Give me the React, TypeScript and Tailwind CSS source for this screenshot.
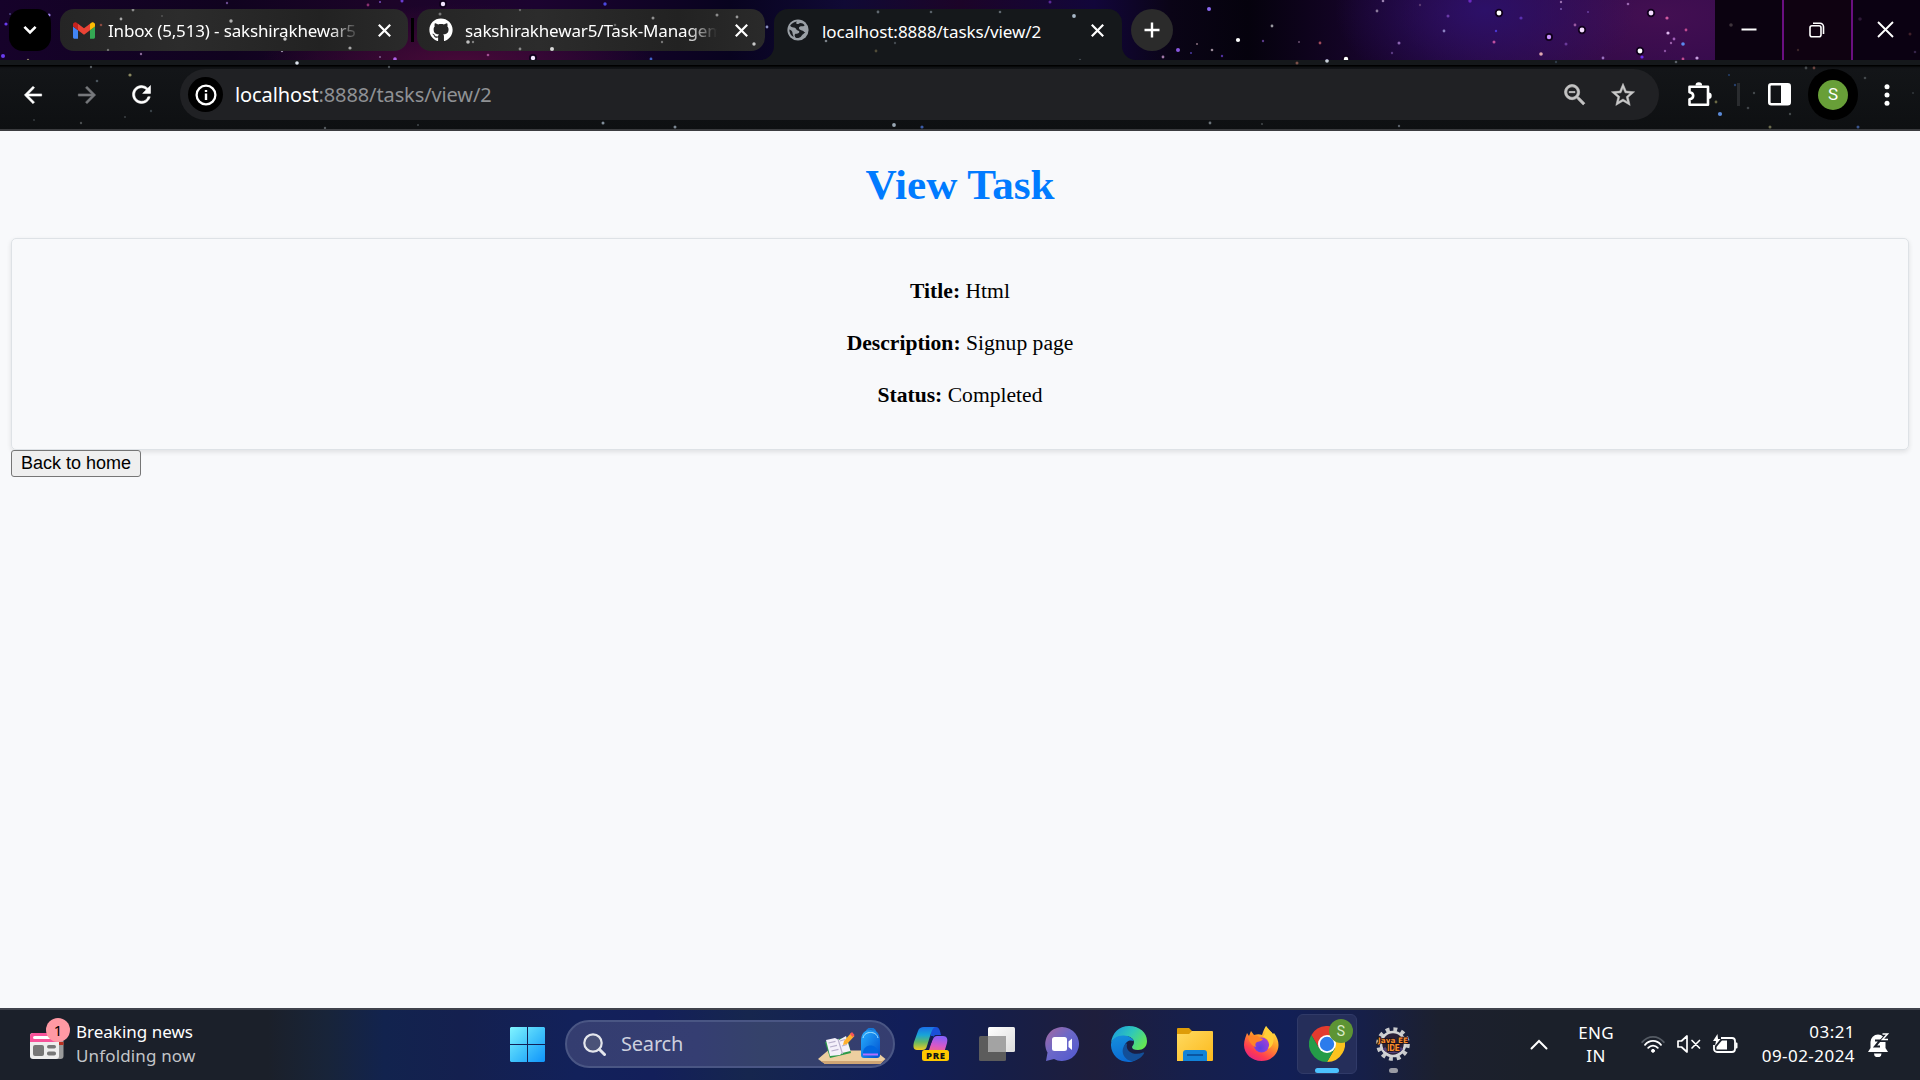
import type { ReactNode } from "react";
import { FaGithub } from "react-icons/fa";

type Star = [number, number, number, string];

const stripStars: Star[] = [
  [6, 24, 1.6, "#6a3cf0"], [10, 14, 1, "#46407a"], [3, 56, 2, "#6a3cf0"], [49, 15, 1.6, "#9a80e8"], [61, 61, 1, "#7050c0"],
  [28, 60, 1.2, "#8a8060"], [227, 3, 1.2, "#6a4a90"], [282, 51, 1.2, "#9a8ca8"], [141, 54, 1.2, "#8a6a98"], [443, 4, 2.2, "#f2e4ff"],
  [368, 5, 1.4, "#8a3070"], [380, 2, 1, "#7a50c0"], [402, 1, 1.5, "#6a3cd0"], [395, 59, 1.8, "#b060e8"], [380, 57, 1, "#806090"],
  [533, 58, 2.2, "#f4e8ff"], [605, 4, 1.7, "#4a48e0"], [552, 49, 1, "#3a3060"], [488, 55, 1.3, "#a05090"], [651, 59, 1.4, "#3f62c8"],
  [767, 27, 1.4, "#8a90c0"], [1050, 2, 1.5, "#5a2a98"], [1209, 9, 2, "#8a68f0"], [1238, 40, 2.1, "#ffffff"], [1178, 50, 2, "#8a58e0"],
  [1163, 57, 1.4, "#a078a8"], [1197, 44, 1, "#8a7080"], [1212, 50, 1.3, "#9a8a98"], [1222, 56, 1.2, "#5030a0"], [1191, 53, 1, "#4a3aa0"],
  [1272, 26, 1.4, "#9a9aa0"], [1263, 41, 1.2, "#5a3a88"], [1299, 42, 1, "#6a5070"], [1320, 43, 1.4, "#a04a5a"], [1383, 1, 1.3, "#9a80b0"],
  [1377, 11, 1.4, "#8a7a9a"], [1399, 43, 1.5, "#8a64b0"], [1392, 53, 1.2, "#5a3a80"], [1346, 59, 2.2, "#ffffff"], [1327, 61, 1.8, "#d8d8ff"],
  [1420, 5, 1.2, "#5a3a70"], [1448, 16, 1.5, "#6a3aa8"], [1444, 31, 1.4, "#8a80c0"], [1499, 13, 2.4, "#ffffff"], [1521, 18, 1.6, "#5a30b0"],
  [1496, 31, 1.2, "#4a38d0"], [1494, 42, 1.5, "#c050a0"], [1549, 37, 2.2, "#c890ff"], [1541, 54, 1.8, "#e0a8b0"], [1566, 44, 1.5, "#6a3a9a"],
  [1470, 1, 1.7, "#6a2ac0"], [1561, 2, 1.2, "#9a70b0"], [1575, 25, 1.4, "#9a5aa0"], [1561, 9, 1, "#7a5ab0"], [1582, 30, 2.4, "#f4dcff"],
  [1588, 12, 1, "#6a40a0"], [1651, 13, 2.4, "#f4dcff"], [1667, 18, 1.6, "#d05aa0"], [1668, 33, 1.6, "#e0b8f0"], [1683, 44, 1.8, "#5a8af0"],
  [1640, 51, 2.4, "#ffffff"], [1642, 57, 1.6, "#6a30f0"], [1674, 39, 1.4, "#a060b8"], [1686, 30, 1.4, "#c04a90"], [1628, 4, 1.3, "#9a68b0"],
  [1671, 43, 1.2, "#9a60a8"], [1697, 58, 1.6, "#c8a0e0"], [1683, 59, 1.4, "#c04a90"], [1603, 58, 1.4, "#9a70c0"], [1665, 51, 1.2, "#8a50a0"],
];

const controlStars: Star[] = [
  [16, 25, 1.8, "#3e343c"], [145, 19, 1.8, "#2e1838"], [195, 34, 1.5, "#40202a"], [83, 50, 1.2, "#3a2428"], [200, 52, 1.3, "#352448"],
];

const tabStars: Star[] = [
  [133, 10, 1.4, "#8a8a8a"], [121, 19, 1.4, "#a8a8a8"], [101, 25, 1.3, "#8a4a40"], [231, 21, 1.7, "#b0b0b0"], [285, 39, 1.7, "#d0d0d0"],
  [350, 48, 1.6, "#a8a8a8"], [108, 50, 1.2, "#707070"], [162, 16, 1, "#555"], [468, 42, 1.8, "#c0c0c0"], [473, 42, 1.2, "#808080"],
  [520, 49, 1.4, "#8a8a8a"], [552, 49, 2, "#d8d8d8"], [520, 10, 1.2, "#666"], [440, 14, 1.5, "#777"], [653, 18, 1.5, "#909090"],
  [717, 15, 1.5, "#8a8a8a"], [737, 17, 1.4, "#999"], [754, 44, 1.7, "#c8c8c8"], [615, 25, 1.3, "#666"], [662, 42, 1.2, "#777"],
  [826, 41, 1.3, "#7a8088"], [878, 12, 1.4, "#606870"], [931, 12, 1.3, "#586068"], [1000, 12, 1.3, "#606870"], [1074, 16, 1.9, "#a8b8c8"],
  [876, 51, 1.4, "#504c38"], [895, 43, 1.2, "#444a50"], [1080, 60, 1.2, "#444a50"],
];

const toolbarStars: Star[] = [
  [297, 3, 1.8, "#dfe6ee"], [91, 7, 1.2, "#555b60"], [130, 15, 1.6, "#8a8860"], [97, 21, 1.3, "#4a545c"], [151, 51, 1.2, "#3a4248"],
  [125, 57, 1.1, "#3a3e42"], [34, 60, 1.1, "#33383c"], [81, 63, 1.2, "#4a4e50"], [389, 7, 1.2, "#4a5055"], [325, 68, 1.2, "#555b60"],
  [418, 65, 1.1, "#3f4448"], [603, 63, 1.5, "#808c98"], [675, 67, 1.5, "#7c8894"], [894, 65, 1.9, "#9aa8b4"], [922, 67, 1.6, "#3c5ca8"],
  [1210, 63, 1.4, "#6a7278"], [1297, 3, 1.5, "#7a5048"], [1327, 1, 1.8, "#c8d0d8"], [1399, 66, 1.2, "#5a6068"], [1262, 64, 1, "#44494c"],
  [1676, 2, 1.3, "#5a6068"], [1556, 2, 1.2, "#303c48"], [1720, 54, 2.1, "#5a8ad8"], [1716, 42, 1.4, "#6a6844"], [1748, 48, 1.3, "#3f4448"],
  [1754, 33, 1.2, "#44494c"], [1735, 25, 1.2, "#26406c"], [1806, 8, 1.4, "#44494c"], [1814, 8, 1.4, "#6a4440"], [1865, 18, 1.3, "#44494c"],
  [1770, 67, 1.5, "#6a6a4c"], [1858, 67, 1.5, "#3a548c"], [1790, 54, 1.2, "#44494c"], [1913, 33, 1, "#33383c"], [1729, 15, 1, "#26406c"],
];

function Starfield({ stars, height, dx = 0, dy = 0 }: { stars: Star[]; height: number; dx?: number; dy?: number }) {
  return (
    <svg className="pointer-events-none absolute left-0 top-0" width="1920" height={height} viewBox={`0 0 1920 ${height}`}>
      {stars.map(([x, y, r, c], i) => (
        <g key={i}>
          {r > 2.1 && <circle cx={x - dx} cy={y - dy} r={r + 1.8} fill="#10001c" />}
          <circle cx={x - dx} cy={y - dy} r={r} fill={c} />
        </g>
      ))}
    </svg>
  );
}

const glyphs = {
  back: "M20 11H7.830l5.590-5.590L12 4l-8 8 8 8 1.410-1.410L7.830 13H20v-2z",
  forward: "M12 4l-1.410 1.410L16.170 11H4v2h12.170l-5.580 5.590L12 20l8-8z",
  reload: "M17.650 6.350A7.958 7.958 0 0 0 12 4c-4.420 0-7.990 3.580-7.990 8s3.570 8 7.990 8c3.730 0 6.840-2.550 7.730-6h-2.080A5.990 5.990 0 0 1 12 18c-3.310 0-6-2.690-6-6s2.690-6 6-6c1.660 0 3.140.690 4.220 1.780L13 11h7V4l-2.350 2.350z",
  zoomOut: "M15.500 14h-.790l-.280-.270A6.471 6.471 0 0 0 16 9.500 6.500 6.500 0 1 0 9.500 16c1.610 0 3.090-.590 4.230-1.570l.270.280v.790l5 4.990L20.490 19l-4.990-5zm-6 0C7.010 14 5 11.990 5 9.500S7.010 5 9.500 5 14 7.010 14 9.500 11.990 14 9.500 14zM7 9h5v1H7z",
  star: "M22 9.240l-7.190-.620L12 2 9.190 8.630 2 9.240l5.460 4.730L5.820 21 12 17.270 18.180 21l-1.630-7.030L22 9.240zM12 15.400l-3.760 2.270 1-4.280-3.320-2.880 4.380-.380L12 6.100l1.710 4.040 4.380.380-3.320 2.880 1 4.280L12 15.400z",
};

function Glyph({ name, size, color, weight, className }: { name: keyof typeof glyphs; size: number; color: string; weight: number; className: string }) {
  return (
    <svg className={`relative shrink-0 ${className}`} width={size} height={size} viewBox="0 0 24 24" fill={color} stroke={color} strokeWidth={weight}>
      <path d={glyphs[name]} />
    </svg>
  );
}

function CloseX({ className = "" }: { className?: string }) {
  return (
    <svg className={`shrink-0 ${className}`} width="13" height="13" viewBox="0 0 13 13" stroke="#fff" strokeWidth="2.2">
      <path d="M.8.8l11.400 11.400M12.200.8L.8 12.200" />
    </svg>
  );
}

function GmailIcon() {
  return (
    <svg width="22" height="17" viewBox="52 42 88 66">
      <path fill="#4285f4" d="M58 108h14V74L52 59v43c0 3.32 2.69 6 6 6" />
      <path fill="#34a853" d="M120 108h14c3.32 0 6-2.69 6-6V59l-20 15" />
      <path fill="#fbbc04" d="M120 48v26l20-15v-8c0-7.42-8.47-11.65-14.4-7.2" />
      <path fill="#ea4335" d="M72 74V48l24 18 24-18v26L96 92" />
      <path fill="#c5221f" d="M52 51v8l20 15V48l-5.6-4.2c-5.94-4.45-14.4-.22-14.4 7.2" />
    </svg>
  );
}

function GlobeIcon() {
  return (
    <svg width="22" height="22" viewBox="0 0 22 22">
      <circle cx="11" cy="11" r="10.6" fill="#9aa0a6" />
      <path fill="#1a1d21" d="M10 2.4c-3 .4-5.600 1.900-6.900 4.300 1.200 1.700 3.300 1.500 4.800 2.100 1.600.700 1.200 2.400 2.900 2.700 1.900.300 1.800 1.800.9 2.600-1.200 1-3.100.200-3.900 1.500-.6 1 .2 2.200 1 3.200 2 .6 4.500-.2 5.600-1.900 1.100-1.700 2.800-2 3.900-3.800-1.600-.2-2-1.500-3.500-1.700-1.400-.200-2.300-.600-2.800-1.800-.5-1.300.8-2.200 2-2.300 1.700-.1 2.900.100 3.600-1.100-1.500-2-4.500-2.700-5.800-1.500-.9.8-2.600.3-2.600-.7 0-.6.300-1.100.8-1.600z" />
      <path fill="#1a1d21" d="M2.300 10.400c1.700.3 3.200 1.700 3.200 3.500 0 1.500.8 2.100 1.100 4-2.700-1.400-4.400-4.300-4.300-7.500z" />
    </svg>
  );
}

function InactiveTab({ icon, title, dx }: { icon: ReactNode; title: string; dx: number }) {
  return (
    <div className="relative flex h-[42px] w-[348px] shrink-0 items-center overflow-hidden rounded-[14px] bg-[linear-gradient(90deg,#252525,#2c2c2c_35%,#222_75%,#2a2a2a)] pl-3">
      <Starfield stars={tabStars} height={42} dx={dx} dy={9} />
      <div className="flex w-6 shrink-0 justify-center">{icon}</div>
      <div className="ml-3 mt-[2px] w-[252px] shrink-0 overflow-hidden whitespace-nowrap text-[17px] leading-[30px] tracking-[-0.15px] text-white [mask-image:linear-gradient(90deg,#000_88%,transparent)]">
        {title}
      </div>
      <CloseX className="ml-[18px]" />
    </div>
  );
}

function TabStrip() {
  return (
    <div className="relative flex h-[60px] items-start overflow-hidden bg-[radial-gradient(ellipse_200px_60px_at_460px_64px,#480a38,transparent),radial-gradient(ellipse_150px_90px_at_1485px_10px,#2c1068,transparent),radial-gradient(ellipse_260px_100px_at_1660px_15px,#430f52,transparent),linear-gradient(90deg,#16022a_0,#10031f_12%,#1c0428_20%,#1c0330_28%,#08031f_38%,#100a35_44%,#1c0428_50%,#12063a_57%,#0a0416_61%,#05020d_65%,#16042a_71%,#240638_78%,#2c0848_88%)]">
      <Starfield stars={stripStars} height={60} />
      <div className="relative ml-[9px] mt-[9px] flex h-[42px] w-[42px] items-center justify-center rounded-[14px] bg-black">
        <svg width="14" height="10" viewBox="0 0 14 10" fill="none" stroke="#fff" strokeWidth="2.6"><path d="M1.400 1.800L7 7.400l5.600-5.600" /></svg>
      </div>
      <div className="relative ml-[9px] mt-[9px] flex items-center">
        <InactiveTab icon={<GmailIcon />} title="Inbox (5,513) - sakshirakhewar5" dx={60} />
        <div className="mx-[3px] h-6 w-[3px] bg-black" />
        <InactiveTab icon={<FaGithub size={24} color="#fff" />} title="sakshirakhewar5/Task-Managem" dx={417} />
      </div>
      <div className="relative ml-[9px] mt-[9px] flex h-[51px] w-[348px] shrink-0 items-start">
        <svg className="absolute -left-[14px] bottom-0" width="14" height="14"><path d="M14 0v14H0A14 14 0 0 0 14 0" fill="#15181b" /></svg>
        <svg className="absolute -right-[14px] bottom-0" width="14" height="14"><path d="M0 0v14h14A14 14 0 0 1 0 0" fill="#15181b" /></svg>
        <div className="relative flex h-[51px] w-full overflow-hidden rounded-t-[14px] bg-[#15181b] pl-[13px]">
          <Starfield stars={tabStars} height={51} dx={774} dy={9} />
          <div className="mt-[10px]"><GlobeIcon /></div>
          <div className="ml-[13px] mt-[8px] w-[262px] whitespace-nowrap text-[17px] leading-[30px] tracking-[-0.05px] text-white">localhost:8888/tasks/view/2</div>
          <CloseX className="ml-[7px] mt-[15px]" />
        </div>
      </div>
      <div className="relative ml-[9px] mt-[9px] flex h-[42px] w-[42px] items-center justify-center rounded-full bg-[#2b2b2b]">
        <svg width="16" height="16" stroke="#fff" strokeWidth="2.4"><path d="M8 .5v15M.5 8h15" /></svg>
      </div>
      <div className="relative ml-auto flex h-full w-[205px] overflow-hidden">
        <div className="flex w-[67px] items-center justify-center bg-[#0b0210]">
          <svg className="relative -top-px" width="16" height="3"><path d="M.5 1.500h15" stroke="#fff" strokeWidth="2" /></svg>
        </div>
        <div className="flex w-[71px] items-center justify-center border-x-2 border-[#6a0f80] bg-[#0f0211]">
          <svg className="relative -left-px" width="16" height="16" viewBox="0 0 16 16" fill="none" stroke="#fff" strokeWidth="1.600"><rect x="1" y="3.800" width="11" height="11" rx="2" /><path d="M4 1.200h7a3.500 3.500 0 0 1 3.500 3.500V12" /></svg>
        </div>
        <div className="flex w-[67px] items-center justify-center bg-[#0b0112]">
          <svg className="relative -left-px -top-px" width="17" height="17" stroke="#fff" strokeWidth="1.900"><path d="M1 1l15 15M16 1L1 16" /></svg>
        </div>
        <Starfield stars={controlStars} height={60} />
      </div>
    </div>
  );
}

function Toolbar() {
  return (
    <div className="relative flex h-[71px] items-center overflow-hidden border-b-2 border-[#3b3c3f] bg-[linear-gradient(#15181b_0_5px,#000_5px_6px,#0e1012_7px,#131518_9px,#0e1012)]">
      <Starfield stars={toolbarStars} height={69} />
      <Glyph name="back" className="ml-[20px]" size={26} color="#fff" weight={0.5} />
      <Glyph name="forward" className="ml-[28px]" size={26} color="#77797c" weight={0.5} />
      <Glyph name="reload" className="ml-[28px]" size={27} color="#fff" weight={0.5} />
      <div className="relative ml-[25px] flex h-[51px] w-[1479px] shrink-0 items-center rounded-full bg-[#202124] pl-2">
        <div className="flex h-[35px] w-[35px] items-center justify-center rounded-full bg-black">
          <svg width="22" height="22" viewBox="0 0 22 22" fill="none" stroke="#fff"><circle cx="11" cy="11" r="9.400" strokeWidth="2.300" /><path d="M11 9.500v6.500M11 6v2" strokeWidth="2.400" /></svg>
        </div>
        <div className="ml-[12px] whitespace-nowrap text-[20px] leading-[30px] tracking-[-0.11px] text-[#8f9194]">
          <span className="text-white">localhost</span>:8888/tasks/view/2
        </div>
        <Glyph name="zoomOut" className="ml-auto" size={28} color="#c4c4c4" weight={0.6} />
        <Glyph name="star" className="ml-[20px] mr-[22px]" size={28} color="#c8c8c8" weight={0.4} />
      </div>
      <svg className="relative ml-[28px] shrink-0" width="26" height="26" viewBox="0 0 26 26">
        <path d="M2.500 4.700H21v18H2.500v-5.500c2.800-.5 3.700-1.800 3.700-3.500s-.9-3-3.700-3.500z" fill="none" stroke="#fff" strokeWidth="2.600" strokeLinejoin="round" />
        <path d="M8.500 3.500a3.300 3.300 0 0 1 6.600 0zM21.500 10.500a3.200 3.200 0 0 1 0 6.400z" fill="#fff" />
      </svg>
      <div className="relative ml-[24px] h-[23px] w-[3px] bg-[#2a2c2f]" />
      <svg className="relative ml-[28px] shrink-0" width="23" height="23" viewBox="0 0 23 23">
        <rect x="1.300" y="1.300" width="20.400" height="20" rx="2" fill="none" stroke="#fff" strokeWidth="2.600" /><path d="M13 1h9v21h-9z" fill="#fff" />
      </svg>
      <div className="relative ml-[17px] flex h-[51px] w-[50px] shrink-0 items-center justify-center rounded-full bg-black">
        <div className="flex h-[30px] w-[30px] items-center justify-center rounded-full bg-[#689f38] font-[Roboto] text-[17px] text-white">S</div>
      </div>
      <svg className="relative ml-[26px]" width="6" height="22" fill="#fff"><circle cx="3" cy="2.800" r="2.500" /><circle cx="3" cy="11" r="2.500" /><circle cx="3" cy="19.200" r="2.500" /></svg>
    </div>
  );
}

function TaskField({ label, value }: { label: string; value: string }) {
  return <p className="leading-[52px]"><b>{label}:</b> {value}</p>;
}

function TaskPage() {
  return (
    <main className="h-[877px] bg-[#f8f9fb] px-[11px] font-['Liberation_Serif',serif] text-[21.6px] text-black">
      <h1 className="pt-[29px] text-center text-[43.2px] font-bold leading-[50px] text-[#007bff]">View Task</h1>
      <section className="mt-[28px] flex h-[212px] flex-col justify-center rounded-[5px] border border-[#dee2e6] pb-[2px] text-center shadow-[0_2px_5px_rgba(0,0,0,0.1)]">
        <TaskField label="Title" value="Html" />
        <TaskField label="Description" value="Signup page" />
        <TaskField label="Status" value="Completed" />
      </section>
      <button className="relative flex h-[27px] w-[130px] items-center justify-center whitespace-nowrap rounded-[3px] border border-[#767676] bg-[#efefef] font-['Liberation_Sans',sans-serif] text-[18px]">Back to home</button>
    </main>
  );
}

function NewsIcon() {
  return (
    <svg width="34" height="26" viewBox="0 0 34 26">
      <path d="M28 8h5.500v15a3 3 0 0 1-3 3H26z" fill="#9a9a9a" /><path d="M27 9h6.500v3H27z" fill="#b83020" />
      <rect width="29" height="26" rx="3" fill="#eee" /><path d="M3 0h23a3 3 0 0 1 3 3v6H0V3a3 3 0 0 1 3-3" fill="#f8539a" />
      <rect x="3" y="3" width="20" height="3" rx="1.500" fill="#fff" /><rect x="3" y="12" width="11" height="11" rx="2" fill="#777" />
      <rect x="17" y="12" width="9" height="3.500" rx="1.700" fill="#777" /><rect x="17" y="18.500" width="9" height="4" rx="1.800" fill="#777" />
    </svg>
  );
}

function WindowsLogo() {
  return (
    <svg className="relative -left-px" width="35" height="35" viewBox="0 0 35 35">
      <defs><linearGradient id="win" x1="0" y1="0" x2="35" y2="35" gradientUnits="userSpaceOnUse"><stop stopColor="#80f4ff" /><stop offset=".5" stopColor="#43c5fb" /><stop offset="1" stopColor="#0f94fb" /></linearGradient></defs>
      <path fill="url(#win)" d="M1 0h16v17H0V1zM18 0h16l1 1v16H18zM0 18h17v17H1l-1-1zM18 18h17v16l-1 1H18z" />
    </svg>
  );
}

function SearchDoodle() {
  return (
    <svg width="68" height="37" viewBox="0 0 68 37">
      <defs><linearGradient id="bag" x1="0" y1="0" x2="1" y2="1"><stop stopColor="#28b0ff" /><stop offset="1" stopColor="#0050d0" /></linearGradient></defs>
      <path d="M0 31l10-8.500h47L67.500 31 62 36H7z" fill="#edcfa0" /><path d="M0 31l3 2h61l3.500-2L62 36H7z" fill="#cfa574" />
      <path d="M7 14l22-5 4 16-21 5z" fill="#2c9a48" /><path d="M8 12l9-2 4 2 7-4 4.500 15-8.500 2-2 2-10 1z" fill="#f4f0fa" />
      <path d="M20 11l4.500 15M10.500 15l7-1.600M12 19l7-1.600M13.500 23l7-1.600M22 13l5-1.500M24 18l5-1.500" stroke="#b8b0cc" strokeWidth="1.200" />
      <path d="M25 17l1-4 7-8 3.500 3-7.500 8z" fill="#ffb02e" /><path d="M32 6l2-2 2.500 3-2 2z" fill="#f4535a" />
      <path d="M48.500 4c1-4.500 8-4.500 9 0" fill="none" stroke="#1678d8" strokeWidth="2" />
      <path d="M43 13c0-8 4-11 9.500-11S62 5 62 13v14q0 3-3 3H46q-3 0-3-3z" fill="url(#bag)" />
      <path d="M45 10c1-4 4-5.500 7.500-5.500S59 6 60 10" fill="none" stroke="#a4e4ff" strokeWidth="1" />
      <path d="M45 25c0-10 15-10 15 0v3H45z" fill="#0067e0" /><path d="M45 26.500h15" stroke="#b070ff" strokeWidth="2" />
    </svg>
  );
}

function CopilotIcon() {
  return (
    <svg width="36" height="36" viewBox="0 0 36 36">
      <defs>
        <linearGradient id="cpa" x1="0" y1="0" x2="0" y2="1"><stop stopColor="#1b6fe8" /><stop offset=".35" stopColor="#18a4d8" /><stop offset=".65" stopColor="#60b868" /><stop offset="1" stopColor="#f4cc20" /></linearGradient>
        <linearGradient id="cpb" x1="0.300" y1="0" x2=".1" y2="1"><stop stopColor="#8c60f8" /><stop offset=".5" stopColor="#d858c8" /><stop offset="1" stopColor="#ff7060" /></linearGradient>
      </defs>
      <path d="M17 1h6c3 0 4 3 5 8h-6l-4 5z" fill="#1a50d8" />
      <path d="M11 1h11c-2 1-3 3-4 6l-4 13c-1 3-2 4-5 4H4c-4 0-4-4-3-8L5 5c1-3 3-4 6-4" fill="url(#cpa)" />
      <path d="M24 10h6c4 0 5 3 4 7l-3 10H9c5 0 6-2 7-5l4-9c1-2 2-3 4-3" fill="url(#cpb)" />
      <path d="M20.500 10l-4.500 14h-4l2-2 4-12z" fill="#121c50" />
      <rect x="9" y="24" width="27" height="11" rx="2.500" fill="#ffc800" />
      <text x="22.800" y="33" textAnchor="middle" fontFamily="Open Sans" fontWeight="800" fontSize="9.500" letterSpacing=".6" fill="#161616">PRE</text>
    </svg>
  );
}

function TaskViewIcon() {
  return (
    <svg width="36" height="34" viewBox="0 0 36 34">
      <defs><linearGradient id="tv" x1="0" y1="0" x2="1" y2="1"><stop stopColor="#fff" /><stop offset="1" stopColor="#dcdcdc" /></linearGradient></defs>
      <rect y="9" width="27" height="25" rx="1.500" fill="#5c5c5c" /><rect x="9" width="27" height="25" rx="1.500" fill="url(#tv)" /><path d="M9 9h18v16H10l-1-1z" fill="#a3a3a3" />
    </svg>
  );
}

function ChatIcon() {
  return (
    <svg className="relative -left-px" width="34" height="35" viewBox="0 0 34 35">
      <defs><linearGradient id="chat" x1="0" y1="0" x2="1" y2="1"><stop stopColor="#a8689c" /><stop offset=".45" stopColor="#6c68c8" /><stop offset="1" stopColor="#5058d0" /></linearGradient></defs>
      <path d="M17 0a17 17 0 1 1-8 32L1 34l1.500-8.500A17 17 0 0 1 17 0" fill="url(#chat)" />
      <rect x="7" y="10" width="15" height="14" rx="2.500" fill="#fff" /><path d="M23.500 14.500l3.500-3v11.500l-3.500-3z" fill="#fff" />
    </svg>
  );
}

function EdgeIcon() {
  return (
    <svg width="36" height="36" viewBox="0 0 36 36">
      <defs>
        <linearGradient id="eg" x1="0" y1=".2" x2="1" y2=".7"><stop stopColor="#1a9be0" /><stop offset=".5" stopColor="#30c8b8" /><stop offset="1" stopColor="#66e850" /></linearGradient>
        <linearGradient id="eb" x1="0" y1="0" x2=".3" y2="1"><stop stopColor="#1590dc" /><stop offset="1" stopColor="#0b6cd4" /></linearGradient>
      </defs>
      <path d="M0 17C1 7 8 0 18 0c11 0 18 7 18 15 0 6-4 9-9 9-4 0-6-1-6-3 0-1 2-2 2-5 0-3-4-6-9-6C7 10 2 13 0 17" fill="url(#eg)" />
      <path d="M0 18C1 12 7 9 13 9.500c5 .2 9 3 9.500 5.500-3-1.600-8 0-9 5-1 7 6 13 16 10-3 4-8 6-12 6C7 36-.5 28 0 18" fill="url(#eb)" />
      <path d="M13.500 19c-5 8 1 16 8.500 16 5-1 9-4 11-7.500.6-1-.3-1.300-1-1-8 3.500-18-.2-16-8.500 0-1-1.500-.5-2.500 1" fill="#134f98" />
    </svg>
  );
}

function ExplorerIcon() {
  return (
    <svg width="36" height="33" viewBox="0 0 36 33">
      <defs><linearGradient id="fold" x1="0" y1="0" x2="1" y2="1"><stop stopColor="#ffda60" /><stop offset="1" stopColor="#fcb91c" /></linearGradient></defs>
      <path d="M0 1q0-1 1-1h11l4 4v6H0z" fill="#de9c08" /><path d="M0 6h12l3-3h20q1 0 1 1v28q0 1-1 1H0z" fill="url(#fold)" />
      <path d="M6 33V25q0-3 3-3h18q3 0 3 3v8z" fill="#1283d8" /><path d="M10 27h16" stroke="#0a4f98" strokeWidth="1.700" />
    </svg>
  );
}

function FirefoxIcon() {
  return (
    <svg width="35" height="36" viewBox="0 0 35 36">
      <defs>
        <linearGradient id="ff" x1=".8" y1="0" x2=".2" y2="1"><stop stopColor="#fff04a" /><stop offset=".4" stopColor="#ff9a28" /><stop offset=".75" stopColor="#ff3c50" /><stop offset="1" stopColor="#e0208c" /></linearGradient>
        <radialGradient id="fp" cx=".4" cy=".7" r=".7"><stop stopColor="#5b3fe0" /><stop offset="1" stopColor="#a040d8" /></radialGradient>
      </defs>
      <path d="M22 0c1 4 5 5 7 8l1-1c3 4 4.500 8 4.500 12C34.500 28 27 35 17.500 35S0 28 0 19c0-5 2-9 3-12l2 3 2-5 3 4c3-1 6-1 8 0 1-3 2-6 4-9" fill="url(#ff)" />
      <circle cx="17.500" cy="19" r="7.600" fill="url(#fp)" />
      <path d="M4 11c5-3 10-2 12 1l3 1c-1 2-3 2.500-6 3-2 1-2 3-1 5-4-1-7-5-8-10" fill="#ff8428" />
      <path d="M22 0c0 6-1 8-3 11 5 1 8 6 5 12 6-3 7-10 4-16" fill="#ffcf36" />
    </svg>
  );
}

function ChromeIcon() {
  return (
    <svg width="36" height="36" viewBox="0 0 36 36">
      <path d="M2.400 9A18 18 0 0 1 33.600 9H18l-7.800 13.500z" fill="#e33b2e" />
      <path d="M33.600 9A18 18 0 0 1 18 36l7.800-13.500L18 9z" fill="#fcc31e" />
      <path d="M18 36A18 18 0 0 1 2.400 9l7.800 13.500h15.600z" fill="#249c48" />
      <circle cx="18" cy="18" r="9" fill="#fff" /><circle cx="18" cy="18" r="7.200" fill="#2c7cec" />
    </svg>
  );
}

function EclipseIcon() {
  return (
    <svg width="36" height="34" viewBox="0 0 36 34">
      <circle cx="18" cy="17" r="14.600" fill="none" stroke="#c9cacc" strokeWidth="4.500" strokeDasharray="3.820 3.820" />
      <circle cx="18" cy="17" r="12" fill="#292038" stroke="#d2d3d5" strokeWidth="2.600" />
      <path d="M9 21c4 5 14 5 18 0" stroke="#544078" strokeWidth="3" fill="none" />
      <g fontFamily="DejaVu Sans" fontWeight="bold" fill="#f68c2c" stroke="#1b1016" strokeWidth="1.600" paintOrder="stroke" textAnchor="middle">
        <text x="18" y="16" fontSize="7.400" textLength="30">Java EE</text><text x="18.500" y="24" fontSize="8" textLength="13">IDE</text>
      </g>
    </svg>
  );
}

function AppCell({ children }: { children: ReactNode }) {
  return <div className="relative flex h-[60px] w-[66px] shrink-0 items-center justify-center">{children}</div>;
}

function SystemTray() {
  return (
    <div className="flex items-center text-[17px] text-white">
      <svg width="18" height="11" viewBox="0 0 18 11" fill="none" stroke="#fff" strokeWidth="2" strokeLinecap="round"><path d="M1.500 9.500L9 2l7.500 7.500" /></svg>
      <div className="ml-[25px] w-[46px] text-center leading-[23px] tracking-[0.3px]">ENG<br />IN</div>
      <svg className="ml-[22px]" width="24" height="20" viewBox="0 0 24 20" fill="none" stroke="#fff" strokeWidth="1.800" strokeLinecap="round">
        <path d="M1.200 8.200c6-7 15.600-7 21.600 0" stroke="#555b64" /><path d="M4 10.800c4.500-5.200 11.500-5.200 16 0M7.200 13.800c2.700-3 6.900-3 9.600 0" /><circle cx="12" cy="16.800" r="1.500" fill="#fff" strokeWidth="1" />
      </svg>
      <svg className="ml-[12px]" width="24" height="20" viewBox="0 0 24 20" fill="none" stroke="#fff" strokeWidth="1.700" strokeLinejoin="round" strokeLinecap="round">
        <path d="M1 7h3.500l5.500-5v16l-5.500-5H1zM15 6.500l7.500 7.500M22.500 6.500L15 14" />
      </svg>
      <svg className="ml-[12px]" width="25" height="21" viewBox="0 0 25 21">
        <path d="M8 4h11a3 3 0 0 1 3 3v8a3 3 0 0 1-3 3H4a3 3 0 0 1-3-3v-4" fill="none" stroke="#fff" strokeWidth="1.800" /><path d="M22.500 8.500h1q1 0 1 1v4q0 1-1 1h-1zM9 6.500h5v9H3.500v-2.500L8 7.500z" fill="#fff" />
        <path d="M4.500 0L0 7h3l-1 5 5.500-7H5z" fill="#fff" />
      </svg>
      <div className="ml-[20px] w-[97px] whitespace-nowrap text-right leading-[24px] tracking-[0.45px]">03:21<br />09-02-2024</div>
      <svg className="ml-[13px] mr-[30px]" width="22" height="25" viewBox="0 0 22 25">
        <path d="M2.500 10a7.500 7.500 0 0 1 15 0v6l2.500 4H0l2.500-4zM6 21.500h7.500a3.700 3.700 0 0 1-7.500 0" fill="#fff" />
        <path d="M7 8.500h5l-5 6h5" stroke="#1b202a" strokeWidth="2" fill="none" /><path d="M14.500 2h5l-5 6h5" stroke="#1b202a" strokeWidth="4" fill="none" /><path d="M14.500 2h5l-5 5.500h5.500" stroke="#fff" strokeWidth="1.500" fill="none" />
      </svg>
    </div>
  );
}

function Taskbar() {
  return (
    <footer className="flex h-[72px] items-center border-t-2 border-[#40434c] bg-[linear-gradient(90deg,#1b202a_0,#1b202a_14%,#182439_17%,#12234e_20%,#14204f_24%,#12215a_30%,#131f5a_34%,#16264e_39%,#111e59_47%,#161e48_52%,#1e1e3c_57%,#161f4c_62%,#121f56_67%,#161f48_71%,#1c202e_75%,#1b202a_80%)] pb-[2px] font-['Noto_Sans',sans-serif]">
      <div className="flex w-[495px] shrink-0 items-center">
        <div className="relative ml-[30px] mt-1"><NewsIcon />
          <div className="absolute -top-[15px] left-[16px] flex h-6 w-6 items-center justify-center rounded-full bg-[#ff99a4] text-[15px] leading-none text-black">1</div>
        </div>
        <div className="ml-[12px] whitespace-nowrap text-[17px] leading-[24px] text-white">Breaking news<br /><span className="tracking-[0.15px] text-[#c3c5c9]">Unfolding now</span></div>
      </div>
      <AppCell><WindowsLogo /></AppCell>
      <div className="ml-1 flex h-[48px] w-[330px] shrink-0 items-center rounded-full border-2 border-[#4a5684] bg-[linear-gradient(90deg,#343d70,#353e72_40%,#35426a_60%,#353d70)] pl-4">
        <svg width="23" height="23" viewBox="0 0 23 23" fill="none" stroke="#e4e6ec" strokeWidth="2.200" strokeLinecap="round"><circle cx="10" cy="10" r="8.700" fill="#4a5278" /><path d="M16.500 16.500l5 5" strokeWidth="3" /></svg>
        <span className="ml-[15px] text-[20px] tracking-[-0.2px] text-[#cdd0de]">Search</span>
        <div className="ml-auto mr-[7px] mt-1"><SearchDoodle /></div>
      </div>
      <div className="ml-[3px] flex">
        <AppCell><CopilotIcon /></AppCell>
        <AppCell><TaskViewIcon /></AppCell>
        <AppCell><ChatIcon /></AppCell>
        <AppCell><EdgeIcon /></AppCell>
        <AppCell><ExplorerIcon /></AppCell>
        <AppCell><FirefoxIcon /></AppCell>
        <AppCell>
          <div className="relative flex h-[60px] w-[60px] items-center justify-center rounded-md border border-[#303a68] bg-[#252e5a]">
            <ChromeIcon />
            <div className="absolute right-[3px] top-[4px] flex h-6 w-6 items-center justify-center rounded-full bg-[#5d9434] font-[Roboto] text-[14px] text-[#dcecca]">S</div>
            <div className="absolute bottom-0 h-[5px] w-6 rounded-full bg-[#4cc2ff]" />
          </div>
        </AppCell>
        <AppCell><EclipseIcon /><div className="absolute bottom-[1px] h-[5px] w-[9px] rounded-full bg-[#9a9ba4]" /></AppCell>
      </div>
      <div className="ml-auto"><SystemTray /></div>
    </footer>
  );
}

export default function App() {
  return (
    <div className="h-[1080px] w-[1920px] overflow-hidden font-['Noto_Sans',sans-serif]">
      <TabStrip />
      <Toolbar />
      <TaskPage />
      <Taskbar />
    </div>
  );
}
